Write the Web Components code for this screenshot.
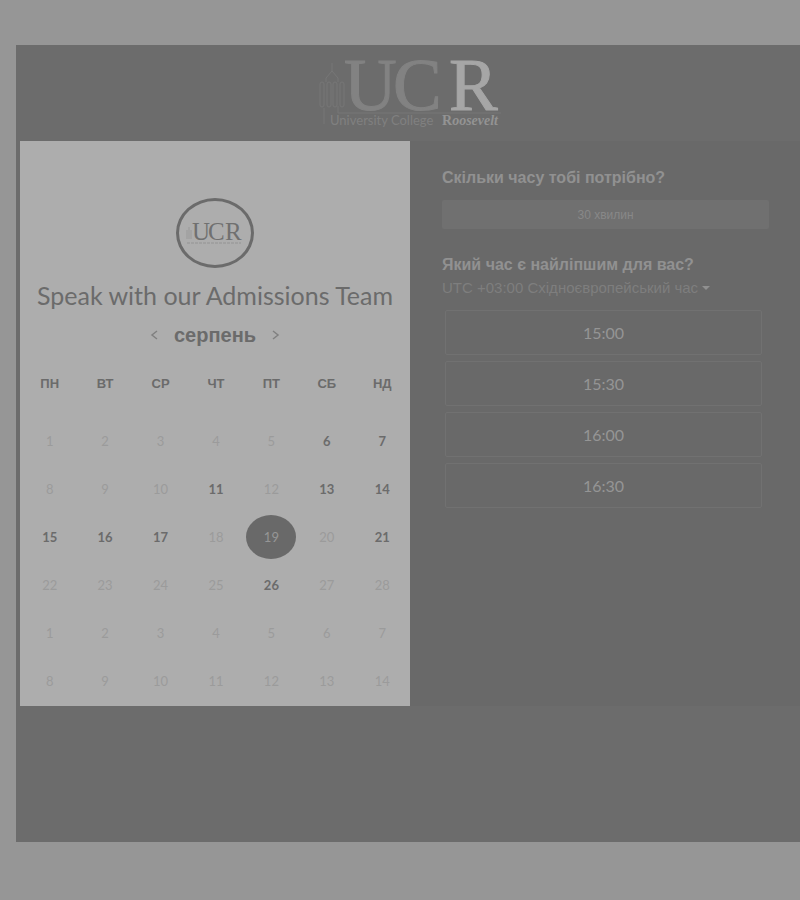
<!DOCTYPE html>
<html lang="uk">
<head>
<meta charset="utf-8">
<meta name="viewport" content="width=device-width, initial-scale=1">
<title>Speak with our Admissions Team</title>
<style>
  body { margin: 0; background: #969696; font-family: Lato, "Liberation Sans", sans-serif; }
</style>
</head>
<body>
<booking-page>
  <college-logo slot="header"></college-logo>
  <booking-calendar slot="calendar" month="серпень">Speak with our Admissions Team</booking-calendar>
  <booking-times slot="times">
    <time-slot>15:00</time-slot>
    <time-slot>15:30</time-slot>
    <time-slot>16:00</time-slot>
    <time-slot>16:30</time-slot>
  </booking-times>
</booking-page>

<script>
const attach = (host, html) => {
  const t = document.createElement('template');
  t.innerHTML = html;
  host.attachShadow({ mode: 'open' }).append(t.content.cloneNode(true));
};

customElements.define('booking-page', class extends HTMLElement {
  constructor() {
    super();
    attach(this, `
      <style>
        :host { display: block; padding: 45px 0 58px 16px; }
        .frame { background: #6c6c6c; padding: 0 0 136px 4px; }
        header { display: flex; justify-content: center; }
        main { display: grid; grid-template-columns: 1fr 1fr; background: #696969; }
      </style>
      <div class="frame">
        <header><slot name="header"></slot></header>
        <main><slot name="calendar"></slot><slot name="times"></slot></main>
      </div>`);
  }
});

customElements.define('college-logo', class extends HTMLElement {
  constructor() {
    super();
    attach(this, `
      <style>
        :host { display: block; }
        svg { display: block; }
        .serif { font-family: "Liberation Serif", serif; }
        .sans { font-family: Lato, sans-serif; }
      </style>
      <svg width="184" height="96" viewBox="0 0 184 96" role="img" aria-label="University College Roosevelt">
        <g class="serif" font-size="73">
          <text x="26" y="65" fill="#828282" stroke="#828282">U</text>
          <text x="75" y="65" fill="#828282" stroke="#828282">C</text>
          <text x="131" y="65" fill="#a6a6a6" stroke="#a6a6a6">R</text>
        </g>
        <g fill="none" stroke="#777777">
          <path d="M14 18v8M14 26l-6 7v4M14 26l6 7v4M6 79V63M20 61v7h163"/>
          <rect x="2" y="37" width="4" height="25" rx="2"/>
          <rect x="9" y="37" width="4" height="25" rx="2"/>
          <rect x="15" y="37" width="4" height="25" rx="2"/>
          <rect x="22" y="37" width="4" height="25" rx="2"/>
        </g>
        <text class="sans" x="12" y="80" font-size="13" fill="#808080">University College</text>
        <text class="serif" x="124" y="80" font-size="14" font-weight="700" fill="#939393">R<tspan font-style="italic">oosevelt</tspan></text>
      </svg>`);
  }
});

customElements.define('booking-calendar', class extends HTMLElement {
  constructor() {
    super();
    const rows = [
      [1, 2, 3, 4, 5, 6, 7], [8, 9, 10, 11, 12, 13, 14], [15, 16, 17, 18, 19, 20, 21],
      [22, 23, 24, 25, 26, 27, 28], [1, 2, 3, 4, 5, 6, 7], [8, 9, 10, 11, 12, 13, 14]
    ];
    const open = [6, 7, 11, 13, 14, 15, 16, 17, 19, 21, 26];
    const day = (n, r) => {
      const free = open.includes(n) && r < 4;
      return `<td><button type="button" ${free ? '' : 'disabled'} ${n === 19 ? 'aria-pressed="true"' : ''}>${n}</button></td>`;
    };
    attach(this, `
      <style>
        :host { display: block; background: #adadad; color: #6b6b6b; padding: 57px 0 1px; text-align: center; }
        .avatar { box-sizing: border-box; width: 78px; height: 70px; margin: 0 auto; border: 3px solid #6b6b6b; border-radius: 50%; display: grid; place-items: center; }
        svg { display: block; }
        h1 { margin: 11px 0 0; font-size: 25px; line-height: 32px; font-weight: 400; white-space: nowrap; }
        nav { display: flex; align-items: center; justify-content: center; gap: 14px; height: 48px; font-family: "Liberation Sans", sans-serif; }
        nav button { width: 12px; height: 24px; display: grid; place-items: center; }
        h2 { margin: 0; font-size: 20px; line-height: 24px; font-weight: 700; }
        button { border: 0; padding: 0; background: none; color: inherit; font: inherit; }
        .days { padding: 0 0 0 2px; }
        table { width: 100%; table-layout: fixed; border-collapse: collapse; }
        th { height: 50px; padding: 0 0 8px; font: 700 13px/16px "Liberation Sans", sans-serif; }
        td { height: 48px; padding: 0; font-size: 13px; font-weight: 700; }
        td button { width: 50px; height: 44px; border-radius: 50%; vertical-align: middle; }
        td button:disabled { color: #9b9b9b; font-weight: 400; }
        td button[aria-pressed] { background: #696969; color: #969696; font-weight: 400; }
      </style>
      <div class="avatar">
        <svg width="60" height="40" viewBox="0 0 60 40" role="img" aria-label="UCR">
          <g font-family="Liberation Serif, serif" font-size="25" fill="#707070">
            <text x="7" y="27">U</text><text x="23" y="27">C</text><text x="40" y="27">R</text>
          </g>
          <path d="M2 17v9M4 14v12M6 17v9" stroke="#999" fill="none"/>
          <path d="M2 30h54" stroke="#939393" stroke-dasharray="3 1" fill="none"/>
        </svg>
      </div>
      <h1><slot></slot></h1>
      <nav>
        <button type="button" aria-label="Попередній місяць"><svg width="8" height="10" fill="none" stroke="#808080" stroke-width="1.5"><path d="M7 1 2 5l5 4"/></svg></button>
        <h2></h2>
        <button type="button" aria-label="Наступний місяць"><svg width="8" height="10" fill="none" stroke="#808080" stroke-width="1.5"><path d="m1 1 5 4-5 4"/></svg></button>
      </nav>
      <div class="days"><table>
        <thead><tr>${['ПН', 'ВТ', 'СР', 'ЧТ', 'ПТ', 'СБ', 'НД'].map(d => `<th scope="col">${d}</th>`).join('')}</tr></thead>
        <tbody>${rows.map((w, r) => `<tr>${w.map(n => day(n, r)).join('')}</tr>`).join('')}</tbody>
      </table></div>`);
    this.shadowRoot.querySelector('h2').textContent = this.getAttribute('month');
  }
});

customElements.define('time-slot', class extends HTMLElement {
  constructor() {
    super();
    attach(this, `
      <style>
        :host { display: block; }
        button { display: block; box-sizing: border-box; width: 100%; height: 45px; border: 1px solid #717171; border-radius: 2px; padding: 0; background: none; color: #959595; font: 400 16px/20px Lato, sans-serif; }
      </style>
      <button type="button"><slot></slot></button>`);
  }
});

customElements.define('booking-times', class extends HTMLElement {
  constructor() {
    super();
    attach(this, `
      <style>
        :host { display: block; padding: 26px 31px 0 32px; color: #919191; }
        h2 { margin: 0; font: 700 16px/22px "Liberation Sans", sans-serif; }
        .length { display: block; width: 100%; height: 29px; margin: 11px 0 25px; border: 0; border-radius: 2px; padding: 0; background: #707070; color: #888888; font: 400 12px/16px "Liberation Sans", sans-serif; }
        .zone { display: flex; align-items: center; gap: 4px; height: 24px; }
        select { appearance: none; field-sizing: content; border: 0; padding: 0; background: none; color: #7e7e7e; font: 400 15px/20px "Liberation Sans", sans-serif; }
        .slots { display: grid; gap: 6px; padding: 10px 7px 0 3px; }
      </style>
      <h2>Скільки часу тобі потрібно?</h2>
      <button class="length" type="button">30 хвилин</button>
      <h2 id="q">Який час є найліпшим для вас?</h2>
      <div class="zone">
        <select aria-labelledby="q"><option>UTC +03:00 Східноєвропейський час</option></select>
        <svg width="8" height="4" aria-hidden="true"><path d="M0 0h8L4 4z" fill="#909090"/></svg>
      </div>
      <div class="slots"><slot></slot></div>`);
  }
});
</script>
</body>
</html>
